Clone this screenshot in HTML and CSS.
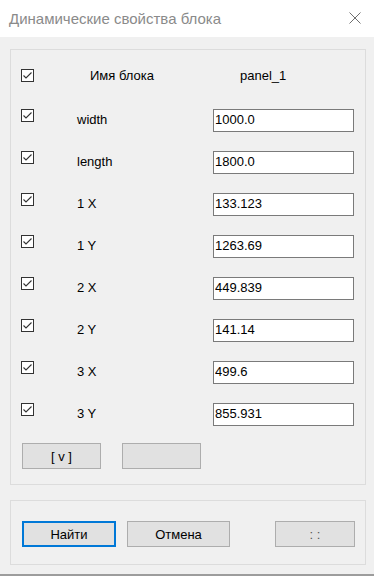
FILE: index.html
```html
<!DOCTYPE html>
<html lang="ru">
<head>
    <meta charset="UTF-8">
    <meta name="viewport" content="width=device-width, initial-scale=1.0">
    <title>Динамические свойства блока</title>
    <link rel="stylesheet" href="styles.css">
</head>
<body>
    <div class="window">
        <!-- Title bar -->
        <header class="titlebar">
            <span class="title">Динамические свойства блока</span>
            <svg class="close" width="12" height="12" viewBox="0 0 12 12">
                <path d="M0.5 0.5 L11.5 11.5 M11.5 0.5 L0.5 11.5" stroke="#6f6f6f" stroke-width="1" fill="none"/>
            </svg>
        </header>

        <div class="dialog">
            <!-- Parameters group -->
            <section class="group params">
                <div class="row head">
                    <span class="check"><svg viewBox="0 0 11 11"><path d="M1.5 5.5 L4 8 L9.5 2.5"/></svg></span>
                    <span class="name-label">Имя блока</span>
                    <span class="name-value">panel_1</span>
                </div>
                <div class="row">
                    <span class="check"><svg viewBox="0 0 11 11"><path d="M1.5 5.5 L4 8 L9.5 2.5"/></svg></span>
                    <span class="label">width</span>
                    <input type="text" value="1000.0">
                </div>
                <div class="row">
                    <span class="check"><svg viewBox="0 0 11 11"><path d="M1.5 5.5 L4 8 L9.5 2.5"/></svg></span>
                    <span class="label">length</span>
                    <input type="text" value="1800.0">
                </div>
                <div class="row">
                    <span class="check"><svg viewBox="0 0 11 11"><path d="M1.5 5.5 L4 8 L9.5 2.5"/></svg></span>
                    <span class="label">1 X</span>
                    <input type="text" value="133.123">
                </div>
                <div class="row">
                    <span class="check"><svg viewBox="0 0 11 11"><path d="M1.5 5.5 L4 8 L9.5 2.5"/></svg></span>
                    <span class="label">1 Y</span>
                    <input type="text" value="1263.69">
                </div>
                <div class="row">
                    <span class="check"><svg viewBox="0 0 11 11"><path d="M1.5 5.5 L4 8 L9.5 2.5"/></svg></span>
                    <span class="label">2 X</span>
                    <input type="text" value="449.839">
                </div>
                <div class="row">
                    <span class="check"><svg viewBox="0 0 11 11"><path d="M1.5 5.5 L4 8 L9.5 2.5"/></svg></span>
                    <span class="label">2 Y</span>
                    <input type="text" value="141.14">
                </div>
                <div class="row">
                    <span class="check"><svg viewBox="0 0 11 11"><path d="M1.5 5.5 L4 8 L9.5 2.5"/></svg></span>
                    <span class="label">3 X</span>
                    <input type="text" value="499.6">
                </div>
                <div class="row">
                    <span class="check"><svg viewBox="0 0 11 11"><path d="M1.5 5.5 L4 8 L9.5 2.5"/></svg></span>
                    <span class="label">3 Y</span>
                    <input type="text" value="855.931">
                </div>

                <div class="tools">
                    <button class="btn tool">[ v ]</button>
                    <button class="btn tool"></button>
                </div>
            </section>

            <!-- Action buttons -->
            <section class="group actions">
                <button class="btn find">Найти</button>
                <button class="btn cancel">Отмена</button>
                <button class="btn extra">: :</button>
            </section>
        </div>
    </div>
</body>
</html>
```

FILE: styles.css
```css
* {
    margin: 0;
    padding: 0;
    box-sizing: border-box;
}

body {
    font-family: "Liberation Sans", Arial, sans-serif;
    font-size: 13px;
    color: #000;
    background-color: #f0f0f0;
}

.window {
    width: 374px;
    height: 576px;
    background-color: #f0f0f0;
    border-bottom: 2px solid #9c9c9c;
}

/* Title bar */
.titlebar {
    height: 37px;
    background-color: #fff;
    display: flex;
    align-items: center;
    justify-content: space-between;
    padding: 0 13px 1px 9px;
}

.title {
    font-family: "Liberation Sans", Arial, sans-serif;
    font-size: 15px;
    color: #8a8a8a;
}

.close {
    display: block;
}

/* Dialog body */
.dialog {
    padding: 12px 8px 0 10px;
}

.group {
    border: 1px solid #dcdcdc;
    width: 356px;
}

.params {
    padding: 19px 10px 15px 10px;
    display: flex;
    flex-direction: column;
}

.row {
    display: flex;
    align-items: center;
    height: 23px;
}

.row + .row {
    margin-top: 19px;
}

.row.head {
    height: 13px;
    margin-bottom: 8px;
}

.check {
    width: 13px;
    height: 13px;
    border: 1px solid #333;
    background-color: #fff;
    flex-shrink: 0;
}

.check svg {
    display: block;
    width: 11px;
    height: 11px;
    fill: none;
    stroke: #333;
    stroke-width: 1.1;
}

.row:not(.head) .check {
    align-self: flex-start;
}

.label {
    margin-left: 43px;
    width: 136px;
    padding-bottom: 2px;
}

.name-label {
    margin-left: 56px;
    width: 150px;
}

input {
    width: 141px;
    height: 23px;
    border: 1px solid #7a7a7a;
    background-color: #fff;
    font-family: "Liberation Sans", Arial, sans-serif;
    font-size: 13px;
    color: #000;
    padding: 0 1px 2px 1px;
    outline: none;
}

.tools {
    display: flex;
    gap: 21px;
    margin-top: 17px;
    padding-left: 1px;
}

/* Buttons */
.btn {
    height: 26px;
    background-color: #e1e1e1;
    border: 1px solid #adadad;
    font-family: "Liberation Sans", Arial, sans-serif;
    font-size: 13px;
    color: #000;
}

.tool {
    width: 79px;
}

.actions {
    margin-top: 15px;
    padding: 20px 10px 17px 11px;
    display: flex;
    align-items: center;
}

.find {
    width: 94px;
    border: 2px solid #0078d7;
}

.cancel {
    width: 103px;
    margin-left: 11px;
}

.extra {
    width: 80px;
    margin-left: auto;
    color: #555;
}
```
